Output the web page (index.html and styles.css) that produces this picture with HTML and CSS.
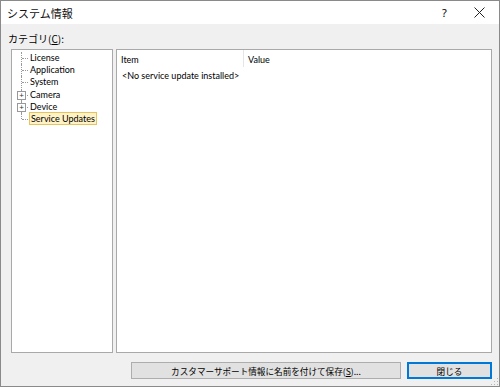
FILE: index.html
```html
<!DOCTYPE html>
<html lang="ja">
<head>
    <meta charset="UTF-8">
    <title>システム情報</title>
    <link rel="stylesheet" href="styles.css">
</head>
<body>
    <div class="window">
        <div class="titlebar">
            <span class="title">システム情報</span>
            <span class="help">?</span>
            <span class="close">
                <svg width="11" height="11" viewBox="0 0 11 11"><path d="M0.5 0.5 L10.5 10.5 M10.5 0.5 L0.5 10.5" stroke="#222" stroke-width="1" fill="none"/></svg>
            </span>
        </div>
        <div class="content">
            <div class="caption">カテゴリ(<u>C</u>):</div>
            <div class="panels">
                <div class="tree">
                    <div class="node leaf">License</div>
                    <div class="node leaf">Application</div>
                    <div class="node leaf">System</div>
                    <div class="node parent"><span class="plus">+</span>Camera</div>
                    <div class="node parent"><span class="plus">+</span>Device</div>
                    <div class="node leaf last"><span class="selected">Service Updates</span></div>
                </div>
                <div class="list">
                    <div class="list-head">
                        <div class="col col-item">Item</div>
                        <div class="col col-value">Value</div>
                    </div>
                    <div class="list-row">&lt;No service update installed&gt;</div>
                </div>
            </div>
            <div class="buttons">
                <button class="btn btn-save">カスタマーサポート情報に名前を付けて保存(<u>S</u>)...</button>
                <button class="btn btn-close">閉じる</button>
            </div>
            <div class="grip"></div>
        </div>
    </div>
</body>
</html>
```

FILE: styles.css
```css
body {
    margin: 0;
    font-family: Lato, "Noto Sans CJK JP", sans-serif;
    font-size: 9px;
    color: #000;
}
.window {
    width: 500px;
    height: 387px;
    box-sizing: border-box;
    border: 1px solid #8a8a8a;
    background: #f0f0f0;
    display: flex;
    flex-direction: column;
}
.titlebar {
    height: 23px;
    background: #fff;
    display: flex;
    align-items: center;
    padding-left: 6px;
}
.title {
    font-family: "Noto Sans CJK JP", sans-serif;
    font-size: 11px;
    flex: 1;
    color: #111;
}
.help {
    font-family: "Noto Sans", sans-serif;
    font-size: 11px;
    width: 35px;
    text-align: center;
}
.close {
    width: 35px;
    display: flex;
    justify-content: center;
    padding-right: 2px;
}
.content {
    flex: 1;
    position: relative;
    padding: 0 7px 0 10px;
    display: flex;
    flex-direction: column;
}
.caption {
    font-family: "Noto Sans CJK JP", sans-serif;
    height: 25px;
    line-height: 29px;
    font-size: 10px;
    margin-left: -3px;
}
.panels {
    display: flex;
    gap: 3px;
    height: 304px;
}
.tree, .list {
    background: #fff;
    border: 1px solid #a9a9a9;
    box-sizing: border-box;
}
.tree {
    width: 102px;
    padding-top: 2px;
}
.node {
    height: 12.2px;
    line-height: 12px;
    position: relative;
    padding-left: 18px;
}
.node::before {
    content: "";
    position: absolute;
    left: 9px;
    top: 0;
    height: 12px;
    border-left: 1px dotted #999;
}
.node::after {
    content: "";
    position: absolute;
    left: 10px;
    top: 6px;
    width: 6px;
    border-top: 1px dotted #999;
}
.node.last::before {
    height: 6px;
}
.plus {
    position: absolute;
    left: 5px;
    top: 2px;
    width: 7px;
    height: 7px;
    border: 1px solid #999;
    background: #fff;
    font-size: 8px;
    line-height: 7px;
    text-align: center;
    z-index: 1;
    color: #333;
}
.selected {
    background: #fff2c5;
    border: 1px solid #e6c260;
    margin-left: -1px;
    padding: 0 1px;
}
.list {
    flex: 1;
}
.list-head {
    display: flex;
    height: 17px;
    line-height: 19px;
}
.col {
    padding-left: 4px;
}
.col-item {
    width: 122px;
    border-right: 1px solid #e5e5e5;
}
.list-row {
    padding-left: 5px;
    line-height: 17px;
}
.buttons {
    display: flex;
    justify-content: flex-end;
    gap: 6px;
    margin-top: 9px;
}
.btn {
    font-family: "Noto Sans CJK JP", sans-serif;
    font-size: 8.6px;
    height: 17px;
    padding: 0;
    background: #e1e1e1;
    border: 1px solid #adadad;
    color: #000;
}
.btn-save {
    width: 270px;
}
.btn-close {
    width: 85px;
    border-color: #0078d7;
    box-shadow: inset 0 0 0 1px #0078d7;
}
.grip {
    position: absolute;
    right: 1px;
    bottom: 1px;
    width: 8px;
    height: 8px;
    background:
        radial-gradient(circle, #b5b5b5 1px, transparent 1px) 0 0 / 3px 3px;
    clip-path: polygon(100% 0, 100% 100%, 0 100%);
}
```
